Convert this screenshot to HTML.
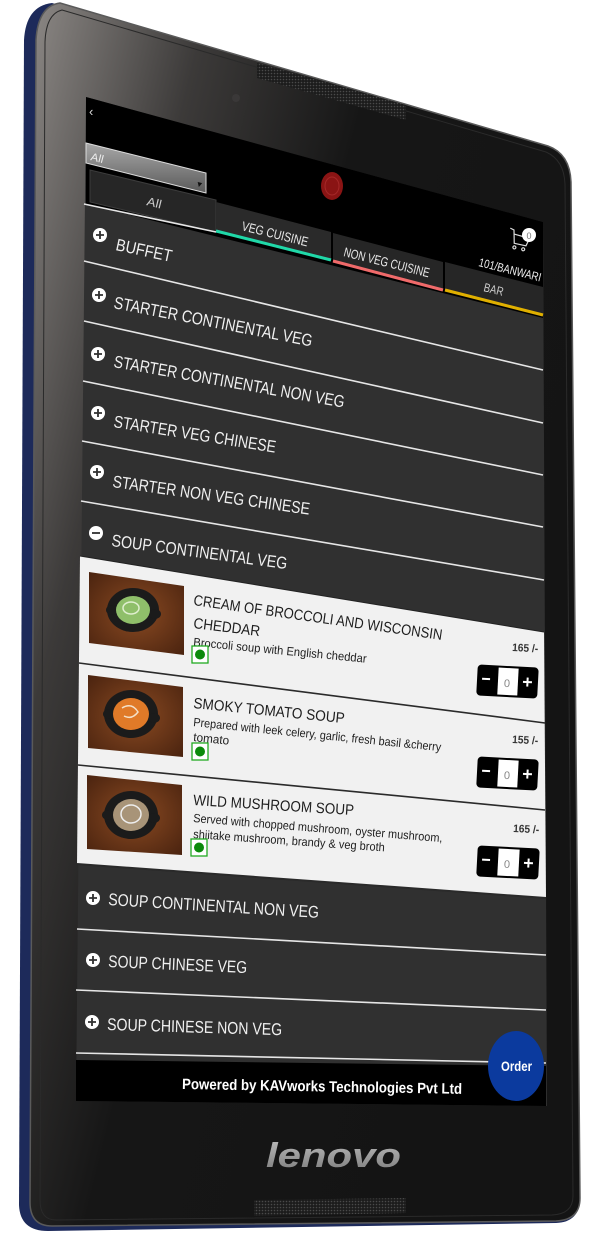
<!DOCTYPE html>
<html><head><meta charset="utf-8"><style>
html,body{margin:0;padding:0;background:#fff;width:608px;height:1248px;overflow:hidden}
svg{display:block}
text{font-family:"Liberation Sans",sans-serif}
</style></head><body>
<svg width="608" height="1248" viewBox="0 0 608 1248" xmlns="http://www.w3.org/2000/svg">
<defs>
<linearGradient id="bez" x1="0" y1="0" x2="1" y2="0.55">
<stop offset="0" stop-color="#8d8986"/><stop offset="0.25" stop-color="#3c3a39"/><stop offset="0.5" stop-color="#161616"/><stop offset="1" stop-color="#141414"/>
</linearGradient>
<linearGradient id="dd" x1="0" y1="0" x2="0" y2="1"><stop offset="0" stop-color="#a8a8a8"/><stop offset="1" stop-color="#5a5a5a"/></linearGradient>
<linearGradient id="len" x1="0" y1="0" x2="0" y2="1"><stop offset="0" stop-color="#bdbdbd"/><stop offset="1" stop-color="#7a7a7a"/></linearGradient>
<pattern id="dots" width="3" height="3" patternUnits="userSpaceOnUse"><rect width="3" height="3" fill="#1c1c1c"/><circle cx="1.5" cy="1.5" r="0.8" fill="#4a4a4a"/></pattern>
<radialGradient id="wood" cx="0.5" cy="0.5" r="0.7"><stop offset="0" stop-color="#8a4a22"/><stop offset="1" stop-color="#4a230f"/></radialGradient>
</defs>

<path d="M52 3 L548 146 Q570 154 571 182 L580 1198 Q580 1222 556 1223 L48 1231 Q20 1231 19 1205 L24 40 Q26 6 52 3 Z" fill="#1d2a5a"/>
<path d="M60 3 L548 146 Q570 154 571 182 L580 1198 Q580 1220 556 1221 L52 1226 Q30 1226 30 1202 L36 40 Q38 6 60 3 Z" fill="url(#bez)" stroke="#5a5a5a" stroke-width="1.5"/>
<path d="M62 10 L546 152 Q564 160 565 184 L573 1196 Q573 1214 552 1215 L56 1220 Q40 1220 40 1200 L45 42 Q46 14 62 10 Z" fill="none" stroke="#2a2a2a" stroke-width="1"/>

<polygon points="257,63 406,105 406,120 257,78" fill="url(#dots)"/>
<circle cx="236" cy="98" r="4" fill="#3a3838"/>

<polygon points="86,97 543,222 547,1106 76,1101" fill="#303030"/>
<polygon points="86,97 543,222 543,318 86,204" fill="#000"/>
<text x="89" y="116" font-size="13" fill="#ddd">‹</text>

<polygon points="86,143 206,173 206,193 86,163" fill="url(#dd)" stroke="#ddd" stroke-width="1"/>
<text x="90" y="160" font-size="11" fill="#eee" transform="rotate(14 90 160)" textLength="13" lengthAdjust="spacingAndGlyphs">All</text>
<text x="195" y="186" font-size="8" fill="#111" transform="rotate(14 195 186)">▼</text>

<polygon points="90,170 90,202 216,232 216,200" fill="#262626" stroke="#3c3c3c" stroke-width="1"/>
<text x="146" y="205" font-size="12" fill="#ccc" transform="rotate(14 146 205)" textLength="15" lengthAdjust="spacingAndGlyphs">All</text>
<polygon points="216,202 331,232 331,260 216,230" fill="#2a2a2a"/>
<line x1="216" y1="231" x2="331" y2="260" stroke="#20d8a8" stroke-width="3"/>
<text x="241" y="230" font-size="13" fill="#e8e8e8" transform="rotate(14 241 230)" textLength="68" lengthAdjust="spacingAndGlyphs">VEG CUISINE</text>
<polygon points="333,233 443,262 443,290 333,261" fill="#262626"/>
<line x1="333" y1="261" x2="443" y2="290" stroke="#f06a6a" stroke-width="3"/>
<text x="343" y="256" font-size="13" fill="#e8e8e8" transform="rotate(14 343 256)" textLength="88" lengthAdjust="spacingAndGlyphs">NON VEG CUISINE</text>
<polygon points="445,262 543,287 543,316 445,290" fill="#262626"/>
<line x1="445" y1="290" x2="543" y2="315" stroke="#e0b000" stroke-width="3"/>
<text x="483" y="291" font-size="12" fill="#ccc" transform="rotate(14 483 291)" textLength="20" lengthAdjust="spacingAndGlyphs">BAR</text>
<text x="478" y="266" font-size="12" fill="#eee" transform="rotate(14 478 266)" textLength="64" lengthAdjust="spacingAndGlyphs">101/BANWARI</text>
<g fill="none" stroke="#ddd" stroke-width="1.2" transform="rotate(12 518 240)">
<path d="M508 230 L512 231 L515 244 L527 244 L529 236 L513 235"/>
<circle cx="516" cy="248" r="1.5"/><circle cx="525" cy="248" r="1.5"/>
</g>
<circle cx="529" cy="235" r="7" fill="#fff"/>
<text x="526.5" y="239" font-size="9" fill="#777">0</text>
<ellipse cx="332" cy="186" rx="11" ry="14" fill="#8a1414"/>
<ellipse cx="332" cy="186" rx="7" ry="9" fill="none" stroke="#a52828" stroke-width="1"/>

<g stroke="#e6e6e6" stroke-width="1.6">
<line x1="84" y1="204" x2="216" y2="232"/>
<line x1="84" y1="261" x2="543" y2="370"/>
<line x1="84" y1="321" x2="543" y2="423"/>
<line x1="83" y1="381" x2="543" y2="475"/>
<line x1="82" y1="441" x2="543" y2="527"/>
<line x1="81" y1="501" x2="544" y2="580"/>
<line x1="77" y1="929" x2="546" y2="955"/>
<line x1="76" y1="990" x2="546" y2="1010"/>
<line x1="76" y1="1053" x2="546" y2="1063"/>
</g>

<g fill="#fff">
<circle cx="100" cy="235" r="7"/><circle cx="99" cy="295" r="7"/><circle cx="98" cy="354" r="7"/>
<circle cx="98" cy="413" r="7"/><circle cx="97" cy="472" r="7"/><circle cx="96" cy="533" r="7"/>
<circle cx="93" cy="898" r="7"/><circle cx="93" cy="960" r="7"/><circle cx="92" cy="1022" r="7"/>
</g>
<g stroke="#303030" stroke-width="1.8">
<path d="M96 235h8M100 231v8"/><path d="M95 295h8M99 291v8"/><path d="M94 354h8M98 350v8"/>
<path d="M94 413h8M98 409v8"/><path d="M93 472h8M97 468v8"/><path d="M92 533h8"/>
<path d="M89 898h8M93 894v8"/><path d="M89 960h8M93 956v8"/><path d="M88 1022h8M92 1018v8"/>
</g>

<g fill="#f0f0f0" font-size="17">
<text x="115" y="250" transform="rotate(12 115 250)" textLength="57" lengthAdjust="spacingAndGlyphs">BUFFET</text>
<text x="113" y="308" transform="rotate(11 113 308)" textLength="202" lengthAdjust="spacingAndGlyphs">STARTER CONTINENTAL VEG</text>
<text x="113" y="367" transform="rotate(10 113 367)" textLength="234" lengthAdjust="spacingAndGlyphs">STARTER CONTINENTAL NON VEG</text>
<text x="113" y="427" transform="rotate(9 113 427)" textLength="164" lengthAdjust="spacingAndGlyphs">STARTER VEG CHINESE</text>
<text x="112" y="487" transform="rotate(8 112 487)" textLength="199" lengthAdjust="spacingAndGlyphs">STARTER NON VEG CHINESE</text>
<text x="111" y="546" transform="rotate(7.5 111 546)" textLength="177" lengthAdjust="spacingAndGlyphs">SOUP CONTINENTAL VEG</text>
<text x="108" y="905" transform="rotate(3.5 108 905)" textLength="211" lengthAdjust="spacingAndGlyphs">SOUP CONTINENTAL NON VEG</text>
<text x="108" y="967" transform="rotate(2.5 108 967)" textLength="139" lengthAdjust="spacingAndGlyphs">SOUP CHINESE VEG</text>
<text x="107" y="1030" transform="rotate(1.7 107 1030)" textLength="175" lengthAdjust="spacingAndGlyphs">SOUP CHINESE NON VEG</text>
</g>

<polygon points="80,556 544,632 546,898 77,864" fill="#f1f1f1"/>
<line x1="80" y1="556" x2="544" y2="632" stroke="#222" stroke-width="1"/>
<line x1="79" y1="663" x2="545" y2="723" stroke="#2a2a2a" stroke-width="1.6"/>
<line x1="78" y1="765" x2="545" y2="810" stroke="#2a2a2a" stroke-width="1.6"/>
<line x1="77" y1="864" x2="546" y2="898" stroke="#2a2a2a" stroke-width="2"/>

<g>
<polygon points="89,572 184,586 184,655 89,643" fill="url(#wood)"/>
<ellipse cx="133" cy="610" rx="26" ry="22" fill="#1b1b1b"/><ellipse cx="112" cy="610" rx="6" ry="5" fill="#1b1b1b"/><ellipse cx="155" cy="614" rx="6" ry="5" fill="#1b1b1b"/>
<ellipse cx="133" cy="610" rx="17" ry="14" fill="#8fbf6a"/><ellipse cx="131" cy="608" rx="8" ry="6" fill="none" stroke="#dfeecf" stroke-width="1.5"/>
<polygon points="88,675 183,687 183,757 88,748" fill="url(#wood)"/>
<ellipse cx="131" cy="714" rx="27" ry="24" fill="#1b1b1b"/><ellipse cx="109" cy="714" rx="6" ry="5" fill="#1b1b1b"/><ellipse cx="154" cy="718" rx="6" ry="5" fill="#1b1b1b"/>
<ellipse cx="131" cy="714" rx="18" ry="16" fill="#e07a28"/><path d="M122 708 q10 -6 16 4 q-6 8 -14 4" fill="none" stroke="#f4e0c8" stroke-width="1.5"/>
<polygon points="87,775 182,785 182,855 87,849" fill="url(#wood)"/>
<ellipse cx="131" cy="815" rx="27" ry="24" fill="#1b1b1b"/><ellipse cx="108" cy="815" rx="6" ry="5" fill="#1b1b1b"/><ellipse cx="154" cy="818" rx="6" ry="5" fill="#1b1b1b"/>
<ellipse cx="131" cy="815" rx="18" ry="16" fill="#a89478"/><ellipse cx="131" cy="814" rx="10" ry="9" fill="none" stroke="#eee" stroke-width="1.5"/>
</g>

<g fill="#1e1e1e">
<text x="193" y="605" font-size="15" transform="rotate(8 193 605)" textLength="251" lengthAdjust="spacingAndGlyphs">CREAM OF BROCCOLI AND WISCONSIN</text>
<text x="193" y="628" font-size="15" transform="rotate(7 193 628)" textLength="67" lengthAdjust="spacingAndGlyphs">CHEDDAR</text>
<text x="193" y="646" font-size="12" transform="rotate(5.5 193 646)" textLength="174" lengthAdjust="spacingAndGlyphs">Broccoli soup with English cheddar</text>
<text x="193" y="708" font-size="15" transform="rotate(5.7 193 708)" textLength="152" lengthAdjust="spacingAndGlyphs">SMOKY TOMATO SOUP</text>
<text x="193" y="726" font-size="12" transform="rotate(5.8 193 726)" textLength="249" lengthAdjust="spacingAndGlyphs">Prepared with leek celery, garlic, fresh basil &amp;cherry</text>
<text x="193" y="741" font-size="12" transform="rotate(5.8 193 741)" textLength="36" lengthAdjust="spacingAndGlyphs">tomato</text>
<text x="193" y="805" font-size="15" transform="rotate(3.6 193 805)" textLength="161" lengthAdjust="spacingAndGlyphs">WILD MUSHROOM SOUP</text>
<text x="193" y="822" font-size="12" transform="rotate(4.6 193 822)" textLength="250" lengthAdjust="spacingAndGlyphs">Served with chopped mushroom, oyster mushroom,</text>
<text x="193" y="838" font-size="12" transform="rotate(4 193 838)" textLength="192" lengthAdjust="spacingAndGlyphs">shiitake mushroom, brandy &amp; veg broth</text>
<g font-size="11" font-weight="bold" fill="#333">
<text x="512" y="651" transform="rotate(3 512 651)" textLength="26" lengthAdjust="spacingAndGlyphs">165 /-</text>
<text x="512" y="743" transform="rotate(3 512 743)" textLength="26" lengthAdjust="spacingAndGlyphs">155 /-</text>
<text x="513" y="832" transform="rotate(3 513 832)" textLength="26" lengthAdjust="spacingAndGlyphs">165 /-</text>
</g>
</g>
<g>
<rect x="192" y="646" width="16" height="17" fill="#fff" stroke="#2a2" stroke-width="1.3"/><circle cx="200" cy="654.5" r="5" fill="#0a8a0a"/>
<rect x="192" y="743" width="16" height="17" fill="#fff" stroke="#2a2" stroke-width="1.3"/><circle cx="200" cy="751.5" r="5" fill="#0a8a0a"/>
<rect x="191" y="839" width="16" height="17" fill="#fff" stroke="#2a2" stroke-width="1.3"/><circle cx="199" cy="847.5" r="5" fill="#0a8a0a"/>
</g>
<g>
<g transform="rotate(3 507 681)">
<rect x="477" y="666" width="61" height="31" rx="4" fill="#000"/><rect x="498" y="668" width="20" height="27" fill="#fff"/>
<text x="504" y="687" font-size="11" fill="#888">0</text><path d="M482 680h8" stroke="#fff" stroke-width="2"/><path d="M523 681h9M527.5 676.5v9" stroke="#fff" stroke-width="2"/>
</g>
<g transform="rotate(3 507 773)">
<rect x="477" y="758" width="61" height="31" rx="4" fill="#000"/><rect x="498" y="760" width="20" height="27" fill="#fff"/>
<text x="504" y="779" font-size="11" fill="#888">0</text><path d="M482 772h8" stroke="#fff" stroke-width="2"/><path d="M523 773h9M527.5 768.5v9" stroke="#fff" stroke-width="2"/>
</g>
<g transform="rotate(3 508 862)">
<rect x="477" y="847" width="62" height="31" rx="4" fill="#000"/><rect x="498" y="849" width="21" height="27" fill="#fff"/>
<text x="504" y="868" font-size="11" fill="#888">0</text><path d="M482 861h8" stroke="#fff" stroke-width="2"/><path d="M524 862h9M528.5 857.5v9" stroke="#fff" stroke-width="2"/>
</g>
</g>

<polygon points="76,1060 546,1066 546,1106 76,1101" fill="#000"/>
<text x="182" y="1089" font-size="15" font-weight="bold" fill="#fff" transform="rotate(1 182 1089)" textLength="280" lengthAdjust="spacingAndGlyphs">Powered by KAVworks Technologies Pvt Ltd</text>
<ellipse cx="516" cy="1066" rx="28" ry="35" fill="#0b3a9e"/>
<text x="501" y="1071" font-size="14" font-weight="bold" fill="#fff" textLength="31" lengthAdjust="spacingAndGlyphs">Order</text>

<text x="266" y="1167" font-size="34" font-weight="bold" font-style="italic" fill="url(#len)" textLength="135" lengthAdjust="spacingAndGlyphs">lenovo</text>
<polygon points="254,1200 406,1198 406,1213 254,1216" fill="url(#dots)"/>
</svg>
</body></html>
